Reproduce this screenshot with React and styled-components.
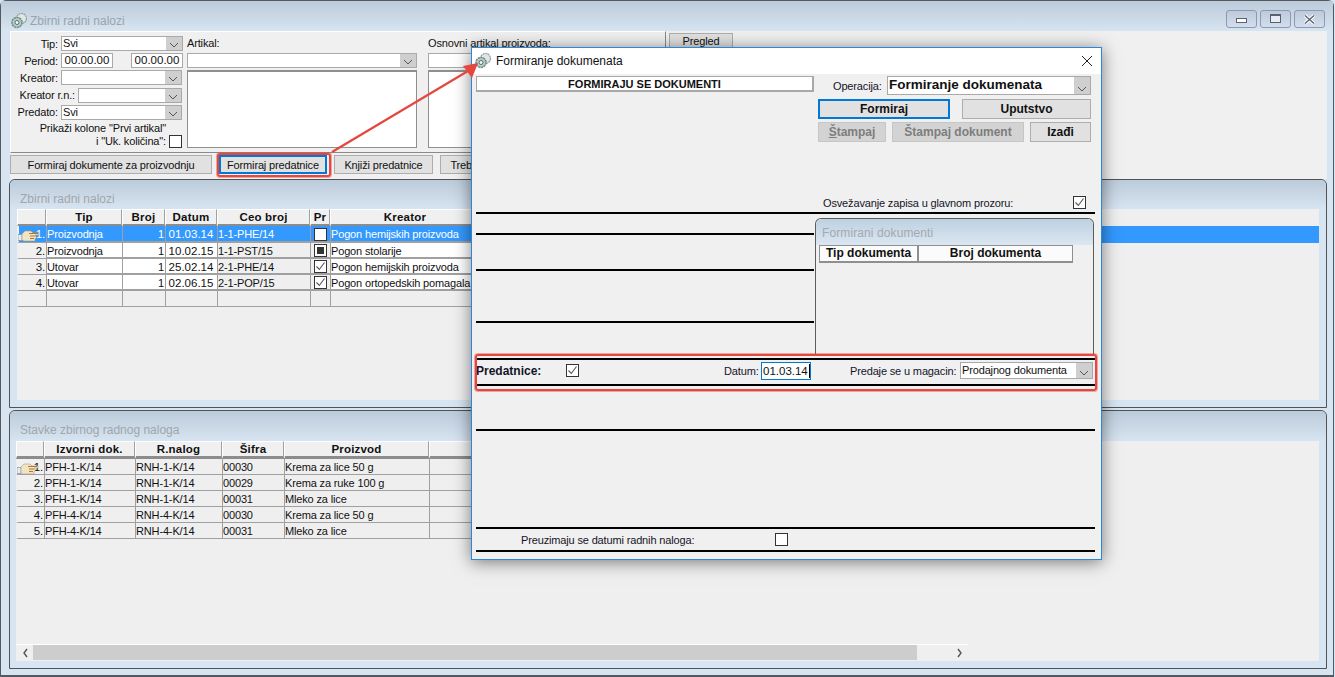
import React from "react";
import styled, { createGlobalStyle } from "styled-components";

const firstRows = [
  { n: "1.", tip: "Proizvodnja", broj: "1", datum: "01.03.14", ceo: "1-1-PHE/14", pr: "empty", kreator: "Pogon hemijskih proizvoda", selected: true },
  { n: "2.", tip: "Proizvodnja", broj: "1", datum: "10.02.15", ceo: "1-1-PST/15", pr: "mixed", kreator: "Pogon stolarije" },
  { n: "3.", tip: "Utovar", broj: "1", datum: "25.02.14", ceo: "2-1-PHE/14", pr: "checked", kreator: "Pogon hemijskih proizvoda" },
  { n: "4.", tip: "Utovar", broj: "1", datum: "02.06.15", ceo: "2-1-POP/15", pr: "checked", kreator: "Pogon ortopedskih pomagala" },
];

const secondRows = [
  ["1.", "PFH-1-K/14", "RNH-1-K/14", "00030", "Krema za lice 50 g"],
  ["2.", "PFH-1-K/14", "RNH-1-K/14", "00029", "Krema za ruke 100 g"],
  ["3.", "PFH-1-K/14", "RNH-1-K/14", "00031", "Mleko za lice"],
  ["4.", "PFH-4-K/14", "RNH-4-K/14", "00030", "Krema za lice 50 g"],
  ["5.", "PFH-4-K/14", "RNH-4-K/14", "00031", "Mleko za lice"],
];

const GearIcon = () => (
  <svg width="18" height="18" viewBox="0 0 18 18">
    <circle cx="11.500" cy="6.500" r="5" fill="#dfe6e4" stroke="#8fa3a0" strokeWidth="1.200" strokeDasharray="2 0.5" />
    <circle cx="7" cy="10.500" r="5" fill="#b7cbc7" stroke="#6f8f8a" strokeWidth="1.600" strokeDasharray="2.200 0.6" />
    <circle cx="7" cy="10.500" r="2" fill="#f4f7f6" stroke="#55706c" strokeWidth="1" />
  </svg>
);

const HandIcon = () => (
  <svg width="22" height="12" viewBox="0 0 22 12">
    <path d="M0 4.500h4V10.500H0z" fill="#e8eef6" stroke="#6f8fb5" strokeWidth="0.700" />
    <path d="M4 4l3-3h6l2 2h6v2h-4l1 1v2l-1 1v2H6l-2-1z" fill="#f1e4c4" stroke="#b09a6c" strokeWidth="0.600" />
    <path d="M11 3.500h9M12 6h5M12 8.500h4" stroke="#b5762c" strokeWidth="1" fill="none" />
  </svg>
);

const Chevron = () => (
  <svg width="10" height="6" viewBox="0 0 10 6">
    <path d="M1 1l4 4 4-4" fill="none" stroke="#555" strokeWidth="1" />
  </svg>
);

const Combo = ({ value, width, height = 15, big }) => (
  <ComboBox $width={width} $height={height} $big={big}>
    <ComboText>{value}</ComboText>
    <ComboArrow><Chevron /></ComboArrow>
  </ComboBox>
);

const Check = ({ state = "empty" }) => (
  <CheckBox $state={state}>
    {state === "checked" && (
      <svg width="11" height="11" viewBox="0 0 11 11">
        <path d="M1.500 5.500l2.800 3L9.500 1.500" fill="none" stroke="#555" strokeWidth="1.100" />
      </svg>
    )}
    {state === "mixed" && <MixedMark />}
  </CheckBox>
);

const App = () => {
  return (
    <Desktop>
      <GlobalStyle />
      <MainWindow>
        <TitleBar>
          <TitleLeft>
            <GearIcon />
            <DimTitle>Zbirni radni nalozi</DimTitle>
          </TitleLeft>
          <WindowButtons>
            <WindowButton><MinGlyph /></WindowButton>
            <WindowButton><MaxGlyph /></WindowButton>
            <WindowButton>
              <svg width="13" height="11" viewBox="0 0 13 11">
                <path d="M2 1.500l9 8M11 1.500l-9 8" stroke="#fff" strokeWidth="3.400" />
                <path d="M2 1.500l9 8M11 1.500l-9 8" stroke="#5a6272" strokeWidth="1.400" fill="none" />
              </svg>
            </WindowButton>
          </WindowButtons>
        </TitleBar>

        <WindowBody>
          <TopRow>
            <FilterBox>
              <FieldColumn>
                <FieldRow>
                  <FieldLabel $width={50}>Tip:</FieldLabel>
                  <Combo value="Svi" width={122} />
                </FieldRow>
                <FieldRow>
                  <FieldLabel $width={50}>Period:</FieldLabel>
                  <DateBox>00.00.00</DateBox>
                  <FieldGap />
                  <DateBox>00.00.00</DateBox>
                </FieldRow>
                <FieldRow>
                  <FieldLabel $width={50}>Kreator:</FieldLabel>
                  <Combo value="" width={121} />
                </FieldRow>
                <FieldRow>
                  <FieldLabel $width={67}>Kreator r.n.:</FieldLabel>
                  <Combo value="" width={104} />
                </FieldRow>
                <FieldRow>
                  <FieldLabel $width={50}>Predato:</FieldLabel>
                  <Combo value="Svi" width={121} />
                </FieldRow>
                <ShowColumns>
                  <ShowText>
                    Prikaži kolone "Prvi artikal"
                    <br />i "Uk. količina":
                  </ShowText>
                  <Check />
                </ShowColumns>
              </FieldColumn>
              <ArticleColumn $width={230}>
                <ArticleLabel>Artikal:</ArticleLabel>
                <Combo value="" width={230} />
                <ListBox />
              </ArticleColumn>
              <ArticleColumn $width={237}>
                <ArticleLabel>Osnovni artikal proizvoda:</ArticleLabel>
                <Combo value="" width={237} />
                <ListBox />
              </ArticleColumn>
            </FilterBox>
            <PreviewButton>Pregled</PreviewButton>
          </TopRow>

          <ActionRow>
            <ActionButton $width={202}>Formiraj dokumente za proizvodnju</ActionButton>
            <ActionButton $width={108} $focused>Formiraj predatnice</ActionButton>
            <ActionButton $width={99}>Knjiži predatnice</ActionButton>
            <ActionButton $width={74}>Trebovanje</ActionButton>
          </ActionRow>

          <Panel $height={229}>
            <PanelTitle $height={29}>Zbirni radni nalozi</PanelTitle>
            <GridArea $inset={8}>
              <HeaderRow>
                <HeadCell $width={29} />
                <HeadCell $width={76}>Tip</HeadCell>
                <HeadCell $width={43}>Broj</HeadCell>
                <HeadCell $width={52}>Datum</HeadCell>
                <HeadCell $width={93}>Ceo broj</HeadCell>
                <HeadCell $width={20}>Pr</HeadCell>
                <HeadCell $width={150}>Kreator</HeadCell>
              </HeaderRow>
              {firstRows.map((row) => (
                <DataRow key={row.n} $selected={row.selected}>
                  <RowMark $width={29} $selected={row.selected}>
                    {row.selected && <HandSlot><HandIcon /></HandSlot>}
                    {row.n}
                  </RowMark>
                  <Cell $width={76} $rule={2} $white={!row.selected} $selected={row.selected}>{row.tip}</Cell>
                  <Cell $width={43} $rule={2} $white={!row.selected} $selected={row.selected} $right>{row.broj}</Cell>
                  <Cell $width={52} $rule={2} $white={!row.selected} $selected={row.selected} $center>{row.datum}</Cell>
                  <Cell $width={93} $rule={2} $selected={row.selected}>{row.ceo}</Cell>
                  <Cell $width={20} $rule={2} $center><Check state={row.pr} /></Cell>
                  <Cell $width={150} $rule={2} $white={!row.selected} $selected={row.selected}>{row.kreator}</Cell>
                </DataRow>
              ))}
              <DataRow>
                <RowMark $width={29} />
                <Cell $width={76} />
                <Cell $width={43} />
                <Cell $width={52} />
                <Cell $width={93} />
                <Cell $width={20} />
                <Cell $width={150} />
              </DataRow>
            </GridArea>
          </Panel>

          <Panel $height={259}>
            <PanelTitle $height={30}>Stavke zbirnog radnog naloga</PanelTitle>
            <GridArea $inset={7}>
              <HeaderRow>
                <HeadCell $width={28} />
                <HeadCell $width={91}>Izvorni dok.</HeadCell>
                <HeadCell $width={87}>R.nalog</HeadCell>
                <HeadCell $width={62}>Šifra</HeadCell>
                <HeadCell $width={145}>Proizvod</HeadCell>
                <HeadCell $width={130} />
              </HeaderRow>
              {secondRows.map((row, index) => (
                <DataRow key={row[0]}>
                  <RowMark $width={28}>
                    {index === 0 && <HandSlot><HandIcon /></HandSlot>}
                    {row[0]}
                  </RowMark>
                  <Cell $width={91}>{row[1]}</Cell>
                  <Cell $width={87}>{row[2]}</Cell>
                  <Cell $width={62}>{row[3]}</Cell>
                  <Cell $width={145}>{row[4]}</Cell>
                  <Cell $width={130} />
                </DataRow>
              ))}
              <ScrollBar>
                <ScrollArrow>
                  <svg width="6" height="10" viewBox="0 0 6 10"><path d="M5 1L2 5l3 4" fill="none" stroke="#555" strokeWidth="1.400" /></svg>
                </ScrollArrow>
                <ScrollThumb />
                <ScrollArrow>
                  <svg width="6" height="10" viewBox="0 0 6 10"><path d="M1 1l3 4-3 4" fill="none" stroke="#555" strokeWidth="1.400" /></svg>
                </ScrollArrow>
              </ScrollBar>
            </GridArea>
          </Panel>
        </WindowBody>
      </MainWindow>

      <Dialog>
        <DialogTitle>
          <GearIcon />
          <DialogName>Formiranje dokumenata</DialogName>
          <CloseMark>
            <svg width="12" height="12" viewBox="0 0 12 12">
              <path d="M1 1l10 10M11 1L1 11" stroke="#222" strokeWidth="1" />
            </svg>
          </CloseMark>
        </DialogTitle>
        <DialogBody>
          <DialogTop>
            <BannerColumn>
              <Banner>FORMIRAJU SE DOKUMENTI</Banner>
            </BannerColumn>
            <ControlColumn>
              <OperationRow>
                <OperationLabel>Operacija:</OperationLabel>
                <Combo value="Formiranje dokumenata" width={204} height={19} big />
              </OperationRow>
              <ButtonRow $top={4}>
                <DialogButton $width={132} $focused>Formiraj</DialogButton>
                <DialogButton $width={129} $gap={12}>Uputstvo</DialogButton>
              </ButtonRow>
              <ButtonRow $top={3}>
                <DialogButton $width={68} $disabled><u>Š</u>tampaj</DialogButton>
                <DialogButton $width={132} $gap={6} $disabled>Štampaj dokument</DialogButton>
                <DialogButton $width={61} $gap={6}>Izađi</DialogButton>
              </ButtonRow>
              <RefreshRow>
                <DialogLabel>Osvežavanje zapisa u glavnom prozoru:</DialogLabel>
                <Check state="checked" />
              </RefreshRow>
            </ControlColumn>
          </DialogTop>
          <Rule />
          <MiddleRow>
            <LinesColumn>
              <Rule $gap={19} />
              <Rule $gap={34} />
              <Rule $gap={50} />
            </LinesColumn>
            <DocsPanel>
              <DocsTitle>Formirani dokumenti</DocsTitle>
              <DocsHeader>
                <DocsHead $width={99}>Tip dokumenta</DocsHead>
                <DocsHead $width={155}>Broj dokumenta</DocsHead>
              </DocsHeader>
            </DocsPanel>
          </MiddleRow>
          <Rule />
          <PredatniceRow>
            <BoldLabel>Predatnice:</BoldLabel>
            <Check state="checked" />
            <DialogLabel>Datum:</DialogLabel>
            <DateInput>01.03.14<Caret /></DateInput>
            <DialogLabel>Predaje se u magacin:</DialogLabel>
            <Combo value="Prodajnog dokumenta" width={133} height={17} />
          </PredatniceRow>
          <Rule />
          <Rule $gap={43} />
          <Rule $gap={96} />
          <DatesRow>
            <DialogLabel>Preuzimaju se datumi radnih naloga:</DialogLabel>
            <Check />
          </DatesRow>
          <Rule />
        </DialogBody>
      </Dialog>

      <ButtonHighlight />
      <RowHighlight />
      <ArrowLayer width="1335" height="677" viewBox="0 0 1335 677">
        <path d="M332 152L468 71" stroke="#e5473e" strokeWidth="2.200" fill="none" />
        <polygon points="478,63 463,66 472,78" fill="#e5473e" />
      </ArrowLayer>
    </Desktop>
  );
};

export default App;

const GlobalStyle = createGlobalStyle`
  html, body {
    margin: 0;
    padding: 0;
    background: #d7e4f1;
  }
  body {
    font-family: "Liberation Sans", Arial, sans-serif;
    font-size: 11px;
    letter-spacing: -0.15px;
    color: #111;
  }
`;

const Desktop = styled.div`
  position: relative;
  width: 1335px;
  height: 677px;
  overflow: hidden;
`;

const MainWindow = styled.div`
  box-sizing: border-box;
  width: 1334px;
  height: 677px;
  border: 1px solid #55585c;
  border-bottom-width: 2px;
  border-radius: 6px 6px 0 0;
  background: #d7e4f1;
  display: flex;
  flex-direction: column;
`;

const TitleBar = styled.div`
  height: 30px;
  flex: none;
  display: flex;
  align-items: flex-start;
  justify-content: space-between;
  padding: 0 8px 0 9px;
  background: linear-gradient(#bccbda, #d7e4f1);
`;

const TitleLeft = styled.div`
  display: flex;
  align-items: center;
  gap: 2px;
  padding-top: 10px;
`;

const DimTitle = styled.span`
  font-size: 12px;
  letter-spacing: 0;
  line-height: 20px;
  color: #9aa3ab;
`;

const WindowButtons = styled.div`
  display: flex;
  gap: 3px;
  padding-top: 9px;
`;

const WindowButton = styled.div`
  box-sizing: border-box;
  width: 31px;
  height: 18px;
  border: 1px solid #8c99b3;
  border-radius: 3px;
  background: linear-gradient(#bdcadb, #d2deec);
  display: flex;
  align-items: center;
  justify-content: center;
`;

const MinGlyph = styled.div`
  width: 9px;
  height: 3px;
  margin-top: 3px;
  border: 1px solid #5a6272;
  background: #fff;
`;

const MaxGlyph = styled.div`
  box-sizing: border-box;
  width: 11px;
  height: 9px;
  margin-bottom: 2px;
  border: 2px solid #5a6272;
  border-width: 2px 1px 1px;
  background: #e6ecf4;
`;

const WindowBody = styled.div`
  flex: 1;
  display: flex;
  flex-direction: column;
  padding-left: 8px;
  padding-right: 5px;
`;

const TopRow = styled.div`
  display: flex;
  height: 124px;
  background: #f0f0f0;
  margin-left: 1px;
  width: 1317px;
`;

const FilterBox = styled.div`
  box-sizing: border-box;
  width: 656px;
  height: 122px;
  display: flex;
  padding: 4px 0 0 0;
  border-right: 1px solid #8a8a8a;
  border-bottom: 1px solid #8a8a8a;
  border-top: 1px solid #fff;
  border-left: 1px solid #fff;
`;

const FieldColumn = styled.div`
  width: 175px;
  flex: none;
  display: flex;
  flex-direction: column;
  gap: 2.200px;
`;

const FieldRow = styled.div`
  display: flex;
  align-items: center;
  height: 15px;
`;

const FieldLabel = styled.label`
  width: ${(p) => p.$width}px;
  flex: none;
  box-sizing: border-box;
  padding-right: 3px;
  text-align: right;
  white-space: nowrap;
`;

const FieldGap = styled.span`
  width: 18px;
  flex: none;
`;

const ComboBox = styled.div`
  box-sizing: border-box;
  width: ${(p) => p.$width}px;
  height: ${(p) => p.$height}px;
  flex: none;
  display: flex;
  background: #fff;
  border: 1px solid #a9a9a9;
  font-size: ${(p) => (p.$big ? "13.500px" : "11px")};
  letter-spacing: ${(p) => (p.$big ? "0" : "-0.15px")};
  font-weight: ${(p) => (p.$big ? 700 : 400)};
`;

const ComboText = styled.span`
  flex: 1;
  padding-left: 1px;
  line-height: 1.200;
  align-self: center;
  white-space: nowrap;
  overflow: hidden;
`;

const ComboArrow = styled.span`
  width: 16px;
  flex: none;
  background: #cfcfcf;
  display: flex;
  align-items: flex-end;
  justify-content: center;
  padding-bottom: 2px;
  box-sizing: border-box;
`;

const DateBox = styled.div`
  box-sizing: border-box;
  width: 52px;
  height: 15px;
  flex: none;
  background: #fff;
  border: 1px solid #a9a9a9;
  text-align: center;
  font-size: 11.500px;
  letter-spacing: 0;
  line-height: 13px;
`;

const ShowColumns = styled.div`
  display: flex;
  align-items: flex-end;
`;

const ShowText = styled.div`
  width: 155px;
  flex: none;
  line-height: 13px;
  text-align: right;
  margin-right: 3px;
`;

const CheckBox = styled.span`
  box-sizing: border-box;
  width: 13px;
  height: 13px;
  flex: none;
  display: inline-flex;
  align-items: center;
  justify-content: center;
  background: #fff;
  border: 1px solid #333;
`;

const MixedMark = styled.span`
  width: 7px;
  height: 7px;
  background: #333;
`;

const ArticleColumn = styled.div`
  width: ${(p) => p.$width}px;
  flex: none;
  margin-left: ${(p) => (p.$width === 230 ? "1px" : "11px")};
  display: flex;
  flex-direction: column;
`;

const ArticleLabel = styled.div`
  height: 17px;
  line-height: 15px;
`;

const ListBox = styled.div`
  box-sizing: border-box;
  height: 78px;
  margin-top: 2px;
  background: #fff;
  border: 1px solid #8f8f8f;
  border-width: 2px 1px 1px 1px;
`;

const PreviewButton = styled.div`
  box-sizing: border-box;
  width: 64px;
  height: 17px;
  margin: 2px 0 0 3px;
  background: #e1e1e1;
  border: 1px solid #adadad;
  text-align: center;
  line-height: 15px;
`;

const ActionRow = styled.div`
  display: flex;
  height: 24px;
  align-items: flex-start;
  gap: 7px;
  background: #f0f0f0;
  width: 1317px;
  margin-left: 1px;
`;

const ActionButton = styled.div`
  box-sizing: border-box;
  width: ${(p) => p.$width}px;
  height: 19px;
  flex: none;
  background: #e1e1e1;
  border: ${(p) => (p.$focused ? "2px solid #0078d7" : "1px solid #adadad")};
  line-height: ${(p) => (p.$focused ? "16px" : "18px")};
  text-align: center;
  white-space: nowrap;
`;

const Panel = styled.section`
  box-sizing: border-box;
  width: 1318px;
  height: ${(p) => p.$height}px;
  flex: none;
  margin-bottom: 2px;
  display: flex;
  flex-direction: column;
  border: 1px solid #505254;
  border-radius: 6px 6px 0 0;
  background: #d7e4f1;
`;

const PanelTitle = styled.div`
  height: ${(p) => p.$height}px;
  flex: none;
  box-sizing: border-box;
  padding: 12px 0 0 10px;
  font-size: 12px;
  letter-spacing: 0;
  line-height: 14px;
  color: #a0a6ac;
  background: linear-gradient(#bccbda, #d7e4f1);
  border-radius: 6px 6px 0 0;
`;

const GridArea = styled.div`
  flex: 1;
  margin: 0 7px 7px ${(p) => p.$inset - 1}px;
  background: #efefef;
  display: flex;
  flex-direction: column;
  position: relative;
`;

const HeaderRow = styled.div`
  display: flex;
  height: 18px;
  flex: none;
`;

const HeadCell = styled.div`
  box-sizing: border-box;
  width: ${(p) => p.$width}px;
  flex: none;
  background: #f0f0f0;
  border-top: 1px solid #fff;
  border-left: 1px solid #fff;
  border-right: 1px solid #a0a0a0;
  border-bottom: 3px solid #8c8c8c;
  font-size: 11.500px;
  font-weight: 700;
  line-height: 15px;
  letter-spacing: 0.2px;
  text-align: center;
`;

const DataRow = styled.div`
  display: flex;
  height: ${(p) => (p.$selected ? "17px" : "16px")};
  margin-top: ${(p) => (p.$selected ? "-1px" : "0")};
  flex: none;
  background: ${(p) => (p.$selected ? "#3399ff" : "transparent")};
`;

const Cell = styled.div`
  box-sizing: border-box;
  width: ${(p) => p.$width}px;
  flex: none;
  display: flex;
  align-items: center;
  justify-content: ${(p) => (p.$right ? "flex-end" : p.$center ? "center" : "flex-start")};
  padding: ${(p) => (p.$rule === 2 ? "1px" : "0")} 1px 0 0;
  background: ${(p) => (p.$white ? "#fff" : "transparent")};
  color: ${(p) => (p.$selected ? "#fff" : "#111")};
  border-left: 1px solid #a0a0a0;
  border-bottom: ${(p) => p.$rule || 1}px solid #a0a0a0;
  font-size: ${(p) => (p.$center ? "11.500px" : "11px")};
  letter-spacing: ${(p) => (p.$center ? "0" : "-0.15px")};
  white-space: nowrap;
  overflow: hidden;
`;

const RowMark = styled.div`
  box-sizing: border-box;
  position: relative;
  width: ${(p) => p.$width}px;
  flex: none;
  text-align: right;
  padding-right: 1px;
  font-size: 11.500px;
  line-height: 16px;
  color: ${(p) => (p.$selected ? "#fff" : "#111")};
  background: ${(p) => (p.$selected ? "#3399ff" : "#f0f0f0")};
  border-bottom: 1px solid #a0a0a0;
  border-left: 2px solid #efefef;
`;

const HandSlot = styled.span`
  position: absolute;
  left: -1px;
  top: 4px;
`;

const ScrollBar = styled.div`
  position: absolute;
  left: 0;
  bottom: 1px;
  width: 952px;
  height: 16px;
  box-sizing: border-box;
  border-top: 1px solid #fff;
  display: flex;
  align-items: stretch;
`;

const ScrollArrow = styled.div`
  width: 17px;
  flex: none;
  display: flex;
  align-items: center;
  justify-content: center;
  &:last-child {
    flex: 1;
    justify-content: flex-end;
    padding-right: 5px;
  }
`;

const ScrollThumb = styled.div`
  width: 884px;
  flex: none;
  background: #cdcdcd;
`;

const Dialog = styled.div`
  position: absolute;
  left: 471px;
  top: 47px;
  box-sizing: border-box;
  width: 631px;
  height: 513px;
  border: 1px solid #2b88d8;
  background: #f0f0f0;
  box-shadow: 0 2px 16px rgba(0, 0, 0, 0.5);
  display: flex;
  flex-direction: column;
`;

const DialogTitle = styled.div`
  height: 26px;
  flex: none;
  display: flex;
  align-items: center;
  gap: 4px;
  background: #fff;
  padding: 0 0 0 2px;
`;

const DialogName = styled.span`
  flex: 1;
  font-size: 12px;
  letter-spacing: 0;
  color: #111;
`;

const CloseMark = styled.span`
  width: 28px;
  display: flex;
  justify-content: center;
`;

const DialogBody = styled.div`
  flex: 1;
  padding: 0 6px 0 4px;
  display: flex;
  flex-direction: column;
`;

const DialogTop = styled.div`
  height: 138px;
  flex: none;
  display: grid;
  grid-template-columns: 338px 1fr;
  column-gap: 4px;
  padding-top: 2px;
  box-sizing: border-box;
`;

const BannerColumn = styled.div``;

const Banner = styled.div`
  box-sizing: border-box;
  height: 16px;
  background: #fff;
  border: 1px solid #a8a8a8;
  border-width: 1px 2px 2px 1px;
  font-size: 11px;
  letter-spacing: 0;
  font-weight: 700;
  line-height: 15px;
  text-align: center;
`;

const ControlColumn = styled.div`
  display: flex;
  flex-direction: column;
  padding-bottom: 3px;
`;

const OperationRow = styled.div`
  display: flex;
  align-items: center;
  height: 19px;
  padding-left: 15px;
`;

const OperationLabel = styled.span`
  width: 54px;
  flex: none;
  color: #141428;
`;

const DialogLabel = styled.span`
  white-space: nowrap;
  color: #141428;
`;

const ButtonRow = styled.div`
  display: flex;
  margin-top: ${(p) => p.$top}px;
`;

const DialogButton = styled.div`
  box-sizing: border-box;
  width: ${(p) => p.$width}px;
  height: 20px;
  margin-left: ${(p) => p.$gap || 0}px;
  flex: none;
  background: ${(p) => (p.$disabled ? "#d3d3d3" : "#e1e1e1")};
  border: ${(p) => (p.$focused ? "2px solid #0078d7" : "1px solid #adadad")};
  border-color: ${(p) => (p.$disabled ? "#c6c6c6" : undefined)};
  color: ${(p) => (p.$disabled ? "#7d7d7d" : "#111")};
  font-size: 12px;
  letter-spacing: 0;
  font-weight: 700;
  line-height: ${(p) => (p.$focused ? "16px" : "18px")};
  text-align: center;
`;

const RefreshRow = styled.div`
  margin-top: auto;
  display: flex;
  align-items: center;
  justify-content: space-between;
  padding: 0 9px 0 5px;
`;

const Rule = styled.div`
  height: 2px;
  flex: none;
  margin-top: ${(p) => p.$gap || 0}px;
  background: #000;
`;

const MiddleRow = styled.div`
  height: 144px;
  flex: none;
  display: flex;
  justify-content: space-between;
`;

const LinesColumn = styled.div`
  width: 338px;
  flex: none;
  display: flex;
  flex-direction: column;
`;

const DocsPanel = styled.div`
  box-sizing: border-box;
  width: 279px;
  height: 138px;
  margin-top: 4px;
  margin-right: 1px;
  border: 1px solid #5c5c5c;
  border-bottom-width: 2px;
  border-radius: 6px 6px 0 0;
  background: #f0f0f0;
`;

const DocsTitle = styled.div`
  box-sizing: border-box;
  height: 26px;
  padding: 7px 0 0 6px;
  font-size: 12px;
  letter-spacing: 0.1px;
  line-height: 14px;
  color: #a3a9ae;
  background: linear-gradient(#bed0e0, #dbe7f2);
  border-radius: 6px 6px 0 0;
`;

const DocsHeader = styled.div`
  display: flex;
  height: 18px;
  margin-left: 3px;
`;

const DocsHead = styled.div`
  box-sizing: border-box;
  width: ${(p) => p.$width}px;
  flex: none;
  background: #fbfbfb;
  border: 1px solid #8f8f8f;
  border-width: 1px 1px 2px 1px;
  font-size: 12px;
  letter-spacing: 0;
  font-weight: 700;
  line-height: 15px;
  text-align: center;
`;

const PredatniceRow = styled.div`
  height: 24px;
  box-sizing: border-box;
  padding-bottom: 3px;
  flex: none;
  display: grid;
  grid-template-columns: 90px 158px 37px 50px 39px 110px 133px;
  align-items: center;
  & > :nth-child(5) {
    grid-column: 6;
  }
  & > :nth-child(6) {
    grid-column: 7;
  }
`;

const BoldLabel = styled.span`
  font-size: 12px;
  letter-spacing: 0;
  font-weight: 700;
  color: #141428;
`;

const DateInput = styled.div`
  box-sizing: border-box;
  width: 50px;
  height: 18px;
  border: 1px solid #0078d7;
  background: #fff;
  font-size: 11.500px;
  letter-spacing: 0;
  line-height: 16px;
  padding-left: 1px;
  white-space: nowrap;
  display: flex;
  align-items: center;
`;

const Caret = styled.span`
  width: 1px;
  height: 14px;
  margin-left: 1px;
  flex: none;
  background: #000;
`;

const DatesRow = styled.div`
  height: 21px;
  flex: none;
  display: grid;
  grid-template-columns: 254px 1fr;
  align-items: center;
  padding-left: 45px;
`;

const ButtonHighlight = styled.div`
  position: absolute;
  left: 217px;
  top: 153px;
  box-sizing: border-box;
  width: 114px;
  height: 24px;
  border: 2px solid #e5473e;
  box-shadow: 0 0 0 1px rgba(229, 71, 62, 0.45);
  border-radius: 3px;
  pointer-events: none;
`;

const RowHighlight = styled.div`
  position: absolute;
  left: 475px;
  top: 354px;
  box-sizing: border-box;
  width: 622px;
  height: 37px;
  border: 2px solid #e5473e;
  box-shadow: 0 0 0 1px rgba(229, 71, 62, 0.45);
  border-radius: 3px;
  pointer-events: none;
`;

const ArrowLayer = styled.svg`
  position: absolute;
  left: 0;
  top: 0;
  pointer-events: none;
`;
